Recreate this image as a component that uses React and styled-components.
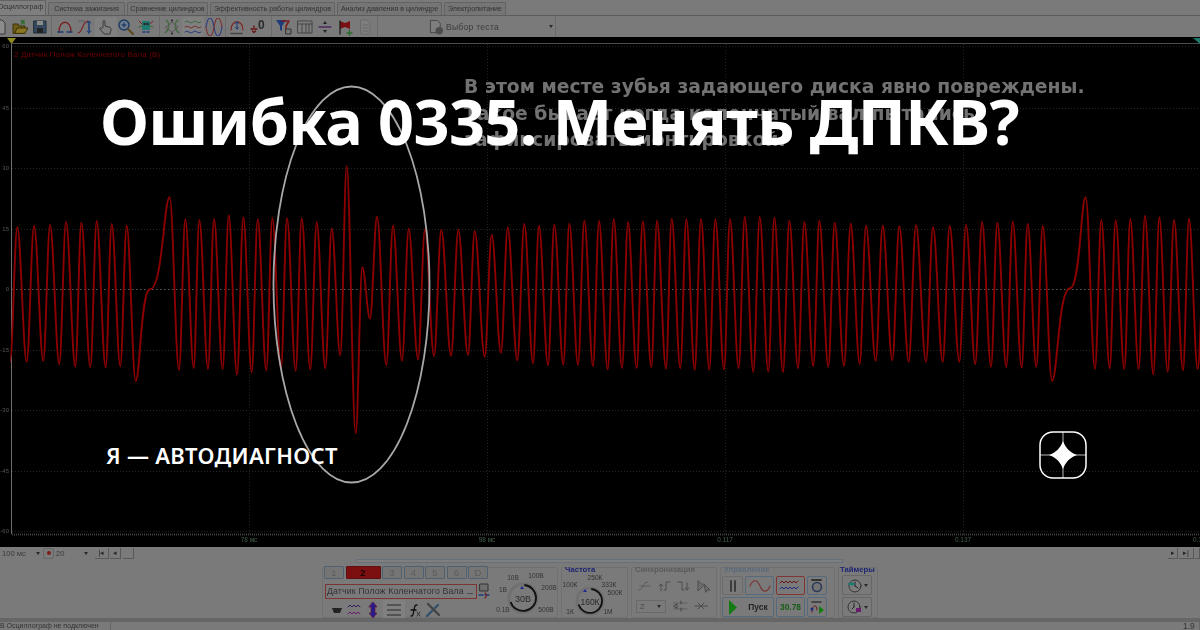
import React from "react";
import styled, { createGlobalStyle } from "styled-components";

const GlobalStyle = createGlobalStyle`
  html, body {
    margin: 0;
    padding: 0;
    background: #000;
  }
`;

const Page = styled.div`
  position: relative;
  width: 1200px;
  height: 630px;
  overflow: hidden;
  background: #000;
  font-family: "Liberation Sans", Arial, sans-serif;
`;

const Screenshot = styled.div`
  display: flex;
  flex-direction: column;
  height: 630px;
  filter: blur(0.65px);
`;

const TabBar = styled.div`
  display: flex;
  align-items: flex-end;
  gap: 2px;
  height: 16px;
  box-sizing: border-box;
  background: #7a7a7a;
  border-bottom: 1px solid #5c5c5c;
`;

const Tab = styled.div`
  flex: none;
  width: ${p => p.$w}px;
  height: ${p => (p.$active ? 15 : 13)}px;
  margin-left: ${p => (p.$active ? -5 : 0)}px;
  box-sizing: border-box;
  border: 1px solid #636363;
  border-bottom: 0;
  border-radius: 2px 2px 0 0;
  background: ${p => (p.$active ? "#7f7f7f" : "#757575")};
  color: #333;
  font-size: 7.1px;
  line-height: 12px;
  text-align: center;
  white-space: nowrap;
`;

const Toolbar = styled.div`
  display: flex;
  height: 21px;
  margin-left: -10px;
  background: #7a7a7a;
`;

const ToolGroup = styled.div`
  display: flex;
  align-items: center;
  flex: none;
  box-sizing: border-box;
  width: ${p => (p.$w ? `${p.$w}px` : "auto")};
  padding: 0 ${p => p.$r ?? 2}px 0 ${p => p.$l ?? 2}px;
  border-right: 1px solid #6a6a6a;
`;

const ToolSlot = styled.div`
  display: flex;
  align-items: center;
  justify-content: center;
  flex: none;
  width: ${p => p.$w ?? 20}px;
  height: 20px;
  background: ${p => (p.$on ? "#808080" : "transparent")};
`;

const TestLabel = styled.span`
  margin-left: 1px;
  color: #3c3c3c;
  font-size: 8.6px;
  letter-spacing: 0.25px;
  white-space: nowrap;
`;

const SmallArrow = styled.span`
  width: 0;
  height: 0;
  margin-left: ${p => p.$gap ?? 0}px;
  border-left: 2.5px solid transparent;
  border-right: 2.5px solid transparent;
  border-top: 3px solid #2a2a2a;
`;

const Scope = styled.div`
  position: relative;
  height: 510px;
  background: #000;
`;

const ScopeSvg = styled.svg`
  display: block;
  width: 1200px;
  height: 510px;
`;

const TraceName = styled.div`
  position: absolute;
  left: 14px;
  top: 13px;
  color: #700000;
  font-size: 8.1px;
  letter-spacing: 0.1px;
`;

const Caption = styled.div`
  position: absolute;
  left: 464px;
  top: 37px;
  color: #727272;
  font-family: "DejaVu Sans", sans-serif;
  font-size: 18.75px;
  font-weight: 700;
  line-height: 26.5px;
  white-space: nowrap;
`;

const Panel = styled.div`
  display: flex;
  flex-direction: column;
  height: 83px;
  background: #7a7a7a;
`;

const TimeRow = styled.div`
  display: flex;
  align-items: center;
  height: 12px;
  color: #3a3a3a;
  font-size: 7.6px;
`;

const TimeField = styled.div`
  display: flex;
  align-items: center;
  justify-content: space-between;
  flex: none;
  box-sizing: border-box;
  width: ${p => p.$w}px;
  padding: 0 ${p => p.$r ?? 0}px 0 2px;
`;

const RoundButton = styled.div`
  display: flex;
  align-items: center;
  justify-content: center;
  flex: none;
  box-sizing: border-box;
  width: 11px;
  height: 11px;
  border: 1px solid #666;
  border-radius: 2px;
  &::after {
    content: "";
    width: 4px;
    height: 4px;
    border-radius: 50%;
    background: #7c1c1c;
  }
`;

const StepButton = styled.div`
  display: flex;
  align-items: center;
  justify-content: center;
  flex: none;
  box-sizing: border-box;
  width: ${p => p.$w}px;
  height: 11px;
  margin-left: ${p => p.$m ?? 1}px;
  border-right: 1px solid #585858;
  border-bottom: 1px solid #585858;
  color: #222;
  font-size: 7px;
`;

const Spacer = styled.div`
  flex: 1;
`;

const Slider = styled.div`
  flex: none;
  box-sizing: border-box;
  width: 487px;
  height: 4px;
  margin-left: 356px;
  border: 1px solid #66707a;
  background: #7f7f7f;
`;

const ControlRow = styled.div`
  display: flex;
  gap: 3px;
  height: 53px;
  margin-top: 2px;
  padding-left: 322px;
`;

const Group = styled.div`
  display: flex;
  flex-direction: ${p => (p.$row ? "row" : "column")};
  flex: none;
  box-sizing: border-box;
  width: ${p => p.$w}px;
  height: 51px;
  margin-top: 2px;
  padding: 0 ${p => p.$pad ?? 0}px;
  border: 1px solid #707070;
  border-radius: 2px;
`;

const GroupTitle = styled.div`
  height: 10px;
  margin-top: -3px;
  margin-left: ${p => p.$m ?? 0}px;
  color: ${p => p.$color ?? "#555"};
  font-size: 7.7px;
  font-weight: 700;
  line-height: 10px;
  white-space: nowrap;
`;

const ChannelColumn = styled.div`
  display: flex;
  flex-direction: column;
  flex: none;
  width: 171px;
`;

const ChannelRow = styled.div`
  display: flex;
  gap: 1.5px;
  margin: -2px 0 0 1px;
`;

const ChannelButton = styled.div`
  flex: none;
  box-sizing: border-box;
  width: ${p => (p.$active ? 35 : 20)}px;
  height: 13px;
  border: 1px solid ${p => (p.$active ? "#601010" : "#4f6070")};
  border-radius: 1px;
  background: ${p => (p.$active ? "#7c0f0f" : "#757575")};
  color: ${p => (p.$active ? "#1d0505" : "#5c5c5c")};
  font-size: 9.5px;
  font-weight: ${p => (p.$active ? 700 : 400)};
  line-height: 11px;
  text-align: center;
`;

const SensorRow = styled.div`
  display: flex;
  align-items: center;
  margin: 4px 0 0 2px;
`;

const SensorField = styled.div`
  display: flex;
  align-items: center;
  justify-content: space-between;
  flex: none;
  box-sizing: border-box;
  width: 152px;
  height: 15px;
  padding: 0 1px;
  border: 1px solid #7a3434;
  color: #333;
  font-size: 8.8px;
  letter-spacing: 0.1px;
  white-space: nowrap;
`;

const Dots = styled.span`
  flex: none;
  width: 10px;
  color: #222;
  font-size: 7px;
  font-weight: 700;
  text-align: center;
`;

const ChannelTools = styled.div`
  display: flex;
  align-items: center;
  height: 18px;
  margin: 2px 0 0 5px;
`;

const KnobSvg = styled.svg`
  display: block;
  flex: none;
`;

const SyncRow = styled.div`
  display: flex;
  align-items: center;
  height: ${p => p.$h}px;
  margin-left: ${p => p.$m ?? 0}px;
`;

const SyncSelect = styled.div`
  display: flex;
  align-items: center;
  justify-content: space-between;
  flex: none;
  box-sizing: border-box;
  width: 30px;
  height: 13px;
  padding: 0 4px 0 3px;
  margin-right: 3px;
  border: 1px solid #6a6a6a;
  color: #444;
  font-size: 8px;
`;

const ControlGrid = styled.div`
  display: grid;
  grid-template-columns: 21px 29px 29px 20px;
  grid-template-rows: 19px 20px;
  column-gap: 2px;
  row-gap: 2px;
  margin: 1px 0 0 1px;
`;

const ControlButton = styled.div`
  display: flex;
  align-items: center;
  justify-content: center;
  gap: ${p => p.$gap ?? 0}px;
  box-sizing: border-box;
  grid-column: ${p => p.$span ?? "auto"};
  border: 1px solid ${p => p.$edge ?? "#556a7c"};
  border-radius: 2px;
  color: ${p => p.$color ?? "#222"};
  font-size: 8.4px;
  font-weight: 700;
`;

const TimerColumn = styled.div`
  display: flex;
  flex-direction: column;
  gap: 2px;
  margin: 0 0 0 3px;
`;

const TimerButton = styled.div`
  display: flex;
  align-items: center;
  justify-content: center;
  gap: 2px;
  box-sizing: border-box;
  width: 30px;
  height: 20px;
  border: 1px solid #666;
  border-radius: 2px;
`;

const Band = styled.div`
  flex: none;
  height: 4px;
  background: #666;
`;

const StatusBar = styled.div`
  display: flex;
  flex: none;
  height: 8px;
  color: #333;
  font-size: 7px;
  line-height: 8px;
  background: #7a7a7a;
`;

const StatusCell = styled.div`
  flex: none;
  width: ${p => p.$w}px;
  box-sizing: border-box;
  padding-left: ${p => p.$pad ?? 0}px;
  border-right: 1px solid #666;
  font-size: ${p => p.$size ?? 7}px;
  white-space: nowrap;
`;

const Overlay = styled.div`
  position: absolute;
  inset: 0;
  display: flex;
  flex-direction: column;
  justify-content: space-between;
  box-sizing: border-box;
  padding: 79px 113px 151px 100px;
  color: #fff;
`;

const Title = styled.h1`
  margin: 0;
  font-family: "Noto Sans", sans-serif;
  font-size: 63px;
  font-weight: 700;
  line-height: 84px;
  letter-spacing: -0.6px;
  white-space: nowrap;
`;

const Footer = styled.div`
  display: flex;
  align-items: center;
  justify-content: space-between;
  padding-left: 6px;
`;

const Brand = styled.div`
  font-family: "Noto Sans", sans-serif;
  font-size: 22px;
  font-weight: 600;
  line-height: 48px;
  letter-spacing: 0.3px;
  white-space: nowrap;
`;

const TABS = [
  ["Осциллограф", 51],
  ["Система зажигания", 77],
  ["Сравнение цилиндров", 81],
  ["Эффективность работы цилиндров", 125],
  ["Анализ давления в цилиндре", 105],
  ["Электропитание", 62]
];

const ZOOM_A = [
  [30, 635], [52, 232], [80, 635], [102, 228], [130, 633], [150, 225], [178, 642], [198, 216],
  [226, 650], [244, 218], [271, 651], [290, 213], [317, 652], [335, 222], [361, 649], [380, 227],
  [407, 693], [450, 418, 1], [509, 142], [537, 660], [556, 208], [581, 654], [598, 210], [624, 657],
  [642, 207], [668, 657], [686, 196], [711, 674], [730, 202], [755, 667], [773, 208], [799, 661],
  [817, 205], [843, 655], [861, 205], [887, 662], [905, 205], [931, 658], [950, 217], [976, 655],
  [995, 236], [1021, 616], [1040, 48], [1067, 850], [1087, 352], [1110, 506], [1131, 200], [1159, 645],
  [1179, 227], [1206, 632], [1226, 236], [1254, 628], [1275, 238], [1302, 618]
];

const ZOOM_B = [
  [34, 120], [63, 497], [85, 120], [114, 495], [134, 124], [164, 500], [185, 135], [213, 488],
  [233, 113], [262, 511], [283, 102], [309, 520], [327, 107], [354, 526], [373, 105], [400, 523],
  [418, 101], [444, 525], [463, 92], [489, 528], [507, 93], [533, 538], [551, 88], [576, 534],
  [594, 97], [620, 534], [638, 94], [664, 531], [681, 92], [708, 536], [725, 86], [751, 535],
  [769, 88], [794, 539], [813, 88], [838, 539], [856, 88], [882, 538], [900, 88], [926, 534],
  [944, 81], [970, 546], [989, 81], [1015, 545], [1033, 83], [1059, 546], [1078, 92], [1104, 535],
  [1123, 97], [1150, 528], [1168, 92], [1195, 530], [1214, 98], [1242, 528], [1262, 101], [1289, 522],
  [1308, 107], [1337, 512], [1358, 107], [1387, 511], [1408, 109], [1436, 515], [1458, 106]
];

const ZOOM_C = [
  [78, 575], [99, 172], [128, 575], [149, 168], [178, 575], [198, 165], [226, 582], [246, 156],
  [273, 590], [292, 158], [319, 591], [338, 155], [365, 593], [383, 162], [409, 590], [428, 168],
  [456, 632], [510, 355, 1], [557, 82], [585, 597], [604, 150], [629, 595], [647, 151], [673, 597],
  [691, 147], [716, 597], [735, 137], [760, 613], [778, 142], [803, 605], [822, 150], [849, 601],
  [867, 146], [893, 597], [915, 200]
];

const place = (list, x0, y0) => list.map(([x, y, f]) => [x0 + x / 3, y0 + y / 3, f]);

const tracePoints = [
  ...place(ZOOM_A, 0, 150),
  ...place(ZOOM_B, 430, 190),
  ...place(ZOOM_C, 900, 170)
];

const tracePath = tracePoints.reduce((d, [x, y, flat], i) => {
  if (!i) return `M${x} ${y}`;
  const [px, py, prevFlat] = tracePoints[i - 1];
  const dx = x - px;
  let a = 0.36;
  let b = 0.64;
  if (flat) {
    a = 0.3;
    b = 0.35;
  }
  if (prevFlat) {
    a = 0.65;
    b = 0.7;
  }
  return `${d} C${(px + a * dx).toFixed(1)} ${py.toFixed(1)} ${(px + b * dx).toFixed(1)} ${y.toFixed(1)} ${x.toFixed(1)} ${y.toFixed(1)}`;
}, "");

const Y_TICKS = [
  [46, "60"], [108, "45"], [168, "30"], [229, "15"], [289, "0"],
  [350, "-15"], [410, "-30"], [471, "-45"], [531, "-60"]
];

const X_TICKS = [
  [249, "78 мс"], [487, "98 мс"], [725, "0.117"], [963, "0.137"]
];

const Ico = ({ w = 18, h = 18, box = "0 0 18 18", children }) => (
  <svg width={w} height={h} viewBox={box} fill="none" strokeLinecap="round" strokeLinejoin="round">
    {children}
  </svg>
);

const DocIcon = () => (
  <Ico>
    <path d="M4 2h7l3 3v11H4z" fill="#8c8c8c" stroke="#3a3a3a" />
  </Ico>
);
const FolderIcon = () => (
  <Ico>
    <path d="M2 15V6h5l1 2h6v7z" fill="#6d5c18" stroke="#3c3208" />
    <path d="M4 15l2-5h11l-3 5z" fill="#8a7620" stroke="#3c3208" />
    <path d="M10 6l3-3M13 3v3M13 3h-3" stroke="#2c6a2c" strokeWidth="1.4" />
  </Ico>
);
const SaveIcon = () => (
  <Ico>
    <path d="M3 3h12v12H3z" fill="#35495e" stroke="#1e2c3a" />
    <path d="M6 3h6v4H6z" fill="#8a8a8a" />
    <path d="M6 10h6v5H6z" fill="#222" />
  </Ico>
);
const ArcIcon = () => (
  <Ico>
    <path d="M3 14C3 1 15 1 15 14" stroke="#7a2020" strokeWidth="1.3" />
    <path d="M2 14h5M11 14h5" stroke="#1d3c7a" strokeWidth="1.5" />
  </Ico>
);
const SpanIcon = () => (
  <Ico>
    <path d="M2 15C7 15 6 3 12 3" stroke="#7a2020" strokeWidth="1.2" />
    <path d="M13 4v11" stroke="#1d3c7a" strokeWidth="1.5" />
    <path d="M11 5l2-2 2 2M11 13l2 2 2-2" stroke="#1d3c7a" />
    <path d="M3 3h5" stroke="#555" strokeDasharray="1 1" />
  </Ico>
);
const HandIcon = () => (
  <Ico>
    <path d="M6 9V3.5a1 1 0 0 1 2 0V8l4 1c2 .5 2 2 2 3l-1 4H7L3 11c-.6-1 .6-2 1.5-1z" fill="#7e7e7e" stroke="#333" strokeWidth=".9" />
  </Ico>
);
const MagnifierIcon = () => (
  <Ico>
    <circle cx="7" cy="7" r="5" fill="#6c7c90" stroke="#1f3a62" strokeWidth="1.4" />
    <path d="M5 7h4M7 5v4" stroke="#132b58" />
    <path d="M11 11l5 5" stroke="#5a4818" strokeWidth="2" />
  </Ico>
);
const RobotIcon = () => (
  <Ico>
    <path d="M5 3h8v9H5z" fill="#1f7a72" />
    <circle cx="7.5" cy="6" r="1.2" fill="#222" />
    <circle cx="10.5" cy="6" r="1.2" fill="#222" />
    <path d="M2 3l3 3M16 3l-3 3" stroke="#7a2020" />
    <path d="M2 9l3-1M16 9l-3-1" stroke="#2a6a2a" />
    <path d="M6 14h2M10 14h2" stroke="#1d3c7a" strokeWidth="1.5" />
  </Ico>
);
const DiamondIcon = () => (
  <Ico>
    <path d="M2 15C7 11 7 5 3 2M16 15C11 11 11 5 15 2" stroke="#3e6a3e" strokeWidth="1.1" />
    <path d="M3 9L9 4l6 5-6 5z" stroke="#555" />
    <circle cx="9" cy="2.5" r="1" fill="#222" />
    <circle cx="9" cy="15.5" r="1" fill="#222" />
  </Ico>
);
const StackedWavesIcon = () => (
  <Ico>
    <path d="M1 4c3-3 5 3 8 0s5 3 8 0" stroke="#3e6a3e" />
    <path d="M1 9c3-3 5 3 8 0s5 3 8 0" stroke="#7a3030" />
    <path d="M1 14c3-3 5 3 8 0s5 3 8 0" stroke="#2c3c80" />
  </Ico>
);
const CrossWavesIcon = () => (
  <Ico>
    <path d="M1 9c2-12 6-12 8 0s6 12 8 0" stroke="#2c3c80" strokeWidth="1.1" />
    <path d="M1 9c2 12 6 12 8 0s6-12 8 0" stroke="#7a3030" strokeWidth="1.1" />
  </Ico>
);
const AutoIcon = () => (
  <Ico>
    <path d="M3 12C3 1 15 1 15 12" stroke="#7a2020" strokeWidth="1.2" />
    <path d="M9 4v7M7.5 5.5L9 4l1.5 1.5M7.5 9.5L9 11l1.5-1.5" stroke="#1d3c7a" />
    <path d="M3 15.5h12" stroke="#444" strokeWidth="1.6" strokeDasharray="2 1" />
  </Ico>
);
const ZeroIcon = () => (
  <Ico>
    <path d="M2 11h6M5 8v1.5M3.5 13L5 14.5 6.5 13" stroke="#6a1414" strokeWidth="1.4" />
    <text x="9" y="11" fontSize="12" fontWeight="700" fill="#2a2a2a" fontFamily="Liberation Sans, sans-serif">0</text>
  </Ico>
);
const FilterIcon = () => (
  <Ico>
    <path d="M1 2h10L7 8v5l-2-1V8z" fill="#1d3c7a" />
    <path d="M7 3h7L11 8v3" stroke="#7a1c1c" strokeWidth="1.5" />
    <path d="M11 11h5v5h-5z" fill="#777" stroke="#333" />
  </Ico>
);
const TableIcon = () => (
  <Ico>
    <path d="M2 3h14v12H2z" fill="#7e7e7e" stroke="#444" />
    <path d="M2 6h14M6 6v9M10 6v9M13 6v9" stroke="#444" />
  </Ico>
);
const DivideIcon = () => (
  <Ico>
    <path d="M3 9h12" stroke="#4e2a60" strokeWidth="1.3" />
    <path d="M9 3l-2 3h4zM9 15l-2-3h4z" fill="#222" />
  </Ico>
);
const FlagIcon = () => (
  <Ico>
    <path d="M4 16V3l5 2 5-2v8l-5-2-5 2" fill="#7a0f14" />
    <path d="M4 3v13" stroke="#222" strokeWidth="1.4" />
    <path d="M11 15h5M13.5 12.5v5" stroke="#2c6a2c" strokeWidth="1.3" />
  </Ico>
);
const GreyDocIcon = () => (
  <Ico>
    <path d="M5 2h6l3 3v11H5z" fill="#7e7e7e" stroke="#6a6a6a" />
    <path d="M7 7h5M7 10h5M7 13h5" stroke="#6a6a6a" />
  </Ico>
);
const TestIcon = () => (
  <Ico>
    <path d="M3 2h7l3 3v10H3z" fill="#7e7e7e" stroke="#444" />
    <circle cx="12" cy="13" r="4" fill="#4c4c4c" />
  </Ico>
);

const PlayIcon = () => (
  <Ico w={10} h={15} box="0 0 10 15">
    <path d="M1 0l8 7.5-8 7.5z" fill="#147a14" />
  </Ico>
);

const Knob = ({ box, cx, cy, r, value, labels, marker, width, height, valueSize = 9 }) => (
  <KnobSvg width={width} height={height} viewBox={box}>
    <circle cx={cx} cy={cy} r={r + 1} stroke="#707070" strokeWidth="3" fill="none" />
    <path
      d={`M${cx + r * 0.1} ${cy - r} A${r} ${r} 0 1 1 ${cx - r * 0.95} ${cy + r * 0.3}`}
      stroke="#111"
      strokeWidth="1.8"
      fill="none"
    />
    <path d={`M${marker[0] - 2} ${marker[1] + 2}L${marker[0]} ${marker[1] - 1}L${marker[0] + 2} ${marker[1] + 2}z`} fill="#1e2c90" />
    {labels.map(([x, y, t]) => (
      <text key={t} x={x} y={y} fontSize="6.6" fill="#333" textAnchor="middle" fontFamily="Liberation Sans, sans-serif">
        {t}
      </text>
    ))}
    <text x={cx} y={cy + 3.5} fontSize={valueSize} fill="#2a2a2a" textAnchor="middle" fontFamily="Liberation Sans, sans-serif">
      {value}
    </text>
  </KnobSvg>
);

const StarLogo = () => (
  <svg width="48" height="48" viewBox="0 0 48 48" fill="none">
    <rect x="1" y="1" width="46" height="46" rx="13" stroke="#fff" strokeWidth="1.5" />
    <path d="M24 1v46M1 24h46" stroke="#fff" strokeOpacity=".72" strokeWidth="1" />
    <path d="M24 10C26.5 17 31 21.5 38 24C31 26.5 26.5 31 24 38C21.5 31 17 26.5 10 24C17 21.5 21.5 17 24 10Z" fill="#fff" />
  </svg>
);

const App = () => (
  <Page>
    <GlobalStyle />
    <Screenshot>
      <TabBar>
        {TABS.map(([name, w], idx) => (
          <Tab key={name} $w={w} $active={idx === 0}>
            {name}
          </Tab>
        ))}
      </TabBar>
      <Toolbar>
        <ToolGroup $l={0} $r={1}>
          <ToolSlot><DocIcon /></ToolSlot>
          <ToolSlot><FolderIcon /></ToolSlot>
          <ToolSlot><SaveIcon /></ToolSlot>
        </ToolGroup>
        <ToolGroup $l={3}>
          <ToolSlot><ArcIcon /></ToolSlot>
          <ToolSlot><SpanIcon /></ToolSlot>
          <ToolSlot $w={22} $on><HandIcon /></ToolSlot>
          <ToolSlot $w={18}><MagnifierIcon /></ToolSlot>
          <ToolSlot $w={22}><RobotIcon /></ToolSlot>
        </ToolGroup>
        <ToolGroup $r={1}>
          <ToolSlot><DiamondIcon /></ToolSlot>
          <ToolSlot $w={22} $on><StackedWavesIcon /></ToolSlot>
          <ToolSlot><CrossWavesIcon /></ToolSlot>
        </ToolGroup>
        <ToolGroup $l={1}>
          <ToolSlot><AutoIcon /></ToolSlot>
          <ToolSlot $w={22}><ZeroIcon /></ToolSlot>
        </ToolGroup>
        <ToolGroup>
          <ToolSlot><FilterIcon /></ToolSlot>
          <ToolSlot $w={21}><TableIcon /></ToolSlot>
          <ToolSlot><DivideIcon /></ToolSlot>
          <ToolSlot><FlagIcon /></ToolSlot>
          <ToolSlot><GreyDocIcon /></ToolSlot>
        </ToolGroup>
        <ToolGroup $w={178} $l={50}>
          <TestIcon />
          <TestLabel>Выбор теста</TestLabel>
          <SmallArrow $gap={50} />
        </ToolGroup>
      </Toolbar>
      <Scope>
        <ScopeSvg viewBox="0 37 1200 510">
          <path d="M12 43.5H1200" stroke="#4c4c4c" />
          {Y_TICKS.map(([y, label]) => (
            <React.Fragment key={y}>
              <path
                d={`M12 ${y + 0.5}H1200`}
                stroke={label === "0" ? "#5c5c5c" : "#262626"}
                strokeDasharray={label === "0" ? "1.5 2.5" : "1 2"}
              />
              <text x="9" y={y + 2} fontSize="6" fill="#565656" textAnchor="end" fontFamily="Liberation Sans, sans-serif">
                {label}
              </text>
            </React.Fragment>
          ))}
          {X_TICKS.map(([x, label]) => (
            <React.Fragment key={x}>
              <path d={`M${x + 0.5} 44V534`} stroke="#222" strokeDasharray="1 2" />
              <text x={x} y="542" fontSize="6.4" fill="#45604a" textAnchor="middle" fontFamily="Liberation Sans, sans-serif">
                {label}
              </text>
            </React.Fragment>
          ))}
          <text x="1193" y="542" fontSize="6.4" fill="#45604a" fontFamily="Liberation Sans, sans-serif">0.1</text>
          <path d="M11.5 44V534" stroke="#6e6e6e" />
          <path d="M12 534.5H1200" stroke="#3e3e3e" strokeWidth="2" strokeDasharray="1 1" />
          <path d="M7 38h9l-4.500 6z" fill="#8c8a20" />
          <path d="M1193 38h7v6z" fill="#1d7a6a" />
          <path d={tracePath} stroke="#8c0000" strokeWidth="1.9" fill="none" strokeLinejoin="round" />
          <ellipse cx="351.5" cy="284.5" rx="78" ry="198" stroke="#a8a8a8" strokeWidth="1.8" fill="none" />
        </ScopeSvg>
        <TraceName>2 Датчик Полож Коленчатого Вала (В)</TraceName>
        <Caption>
          В этом месте зубья задающего диска явно повреждены.
          <br />
          Такое бывает когда коленчатый вал пытались
          <br />
          зафиксировать монтировкой.
        </Caption>
      </Scope>
      <Panel>
        <TimeRow>
          <TimeField $w={43} $r={3}>100 мс<SmallArrow /></TimeField>
          <RoundButton />
          <TimeField $w={39} $r={5}>20<SmallArrow /></TimeField>
          <StepButton $w={14} $m={2}>|◂</StepButton>
          <StepButton $w={11}>◂</StepButton>
          <StepButton $w={11} $m={2} />
          <Spacer />
          <StepButton $w={10}>▸</StepButton>
          <StepButton $w={15}>▸|</StepButton>
          <StepButton $w={5} />
        </TimeRow>
        <Slider />
        <ControlRow>
          <Group $row $w={236}>
            <ChannelColumn>
              <ChannelRow>
                {["1", "2", "3", "4", "5", "6", "D"].map(n => (
                  <ChannelButton key={n} $active={n === "2"}>{n}</ChannelButton>
                ))}
              </ChannelRow>
              <SensorRow>
                <SensorField>Датчик Полож Коленчатого Вала<Dots>...</Dots></SensorField>
                <Ico w={14} h={16} box="0 0 14 16">
                  <path d="M3 1h8v7H3z" fill="#6e6e6e" stroke="#333" />
                  <path d="M2 12h4M8 12h4" stroke="#1d3c7a" strokeWidth="1.4" />
                  <path d="M8 10a3 3 0 0 1 0 5" stroke="#7a2020" strokeWidth="1.2" />
                </Ico>
              </SensorRow>
              <ChannelTools>
                <ToolSlot $w={17}>
                  <Ico w={12} h={10} box="0 0 12 10"><path d="M1 3h10l-2 5H3z" fill="#222" /></Ico>
                </ToolSlot>
                <ToolSlot $w={18}>
                  <Ico w={14} h={14} box="0 0 14 14">
                    <path d="M1 4l2-2 2 2 2-2 2 2 2-2 2 2" stroke="#33205a" />
                    <path d="M1 11l2-2 2 2 2-2 2 2 2-2 2 2" stroke="#6a1a6a" />
                  </Ico>
                </ToolSlot>
                <ToolSlot $w={20}>
                  <Ico w={12} h={16} box="0 0 12 16"><path d="M6 0l4 5H8v6h2l-4 5-4-5h2V5H2z" fill="#2a1a8a" stroke="#6a1030" strokeWidth=".6" /></Ico>
                </ToolSlot>
                <ToolSlot $w={22} $on>
                  <Ico w={14} h={12} box="0 0 14 12"><path d="M0 1h14M0 6h14M0 11h14" stroke="#444" strokeWidth="1.3" /></Ico>
                </ToolSlot>
                <ToolSlot $w={18}>
                  <Ico w={13} h={13} box="0 0 13 13">
                    <path d="M3 12c2 0 2-1 3-6s1-5 3-5M3 6h5" stroke="#111" strokeWidth="1.3" />
                    <path d="M9 8l3 4M12 8l-3 4" stroke="#333" />
                  </Ico>
                </ToolSlot>
                <ToolSlot $w={20}>
                  <Ico w={16} h={16} box="0 0 16 16">
                    <path d="M2 14L13 3" stroke="#33506a" strokeWidth="2.4" />
                    <path d="M3 2l11 11" stroke="#444" strokeWidth="2.4" />
                  </Ico>
                </ToolSlot>
              </ChannelTools>
            </ChannelColumn>
            <Knob
              box="493 568 63 48"
              width={63}
              height={48}
              cx={522}
              cy={598}
              r={13}
              value="30В"
              marker={[521, 587]}
              labels={[
                [512, 580, "10В"], [535, 578, "100В"], [502, 592, "1В"],
                [548, 590, "200В"], [502, 612, "0.1В"], [545, 612, "500В"]
              ]}
            />
          </Group>
          <Group $w={67}>
            <GroupTitle $m={3} $color="#1e2470">Частота</GroupTitle>
            <Knob
              box="562 574 65 42"
              width={65}
              height={42}
              cx={590}
              cy={600}
              r={12}
              value="160К"
              valueSize={8.5}
              marker={[585, 589]}
              labels={[
                [595, 579, "250К"], [570, 586, "100К"], [609, 586, "333К"],
                [615, 594, "500К"], [570, 613, "1К"], [608, 613, "1М"]
              ]}
            />
          </Group>
          <Group $w={86}>
            <GroupTitle $m={3} $color="#5a5a5a">Синхронизация</GroupTitle>
            <SyncRow $h={22} $m={3}>
              <ToolSlot $w={19}><Ico w={14} h={14} box="0 0 14 14"><path d="M1 11c5 0 3-8 9-8M2 7h10" stroke="#5c5c5c" /></Ico></ToolSlot>
              <ToolSlot $w={20}><Ico w={14} h={14} box="0 0 14 14"><path d="M4 12V5M2 7l2-2 2 2M7 11h2V3h4" stroke="#4c4c4c" /></Ico></ToolSlot>
              <ToolSlot $w={20}><Ico w={14} h={14} box="0 0 14 14"><path d="M1 3h4v8h2M10 4v7M8 9l2 2 2-2" stroke="#4c4c4c" /></Ico></ToolSlot>
              <ToolSlot $w={20}><Ico w={14} h={14} box="0 0 14 14"><path d="M1 2v10l5-5zM7 5l6 6-3 0-1 2z" stroke="#4c4c4c" fill="#6e6e6e" /></Ico></ToolSlot>
            </SyncRow>
            <SyncRow $h={18} $m={4}>
              <SyncSelect>2<SmallArrow /></SyncSelect>
              <ToolSlot $w={24}><Ico w={16} h={12} box="0 0 16 12"><path d="M1 3h14M1 9h14" stroke="#5c5c5c" strokeDasharray="1 1" /><path d="M8 1v3M8 8v3M1 6l3-2v4z" stroke="#444" /></Ico></ToolSlot>
              <ToolSlot $w={16}><Ico w={14} h={8} box="0 0 14 8"><path d="M0 4h14M4 1l3 3-3 3M10 1L7 4l3 3" stroke="#4c4c4c" /></Ico></ToolSlot>
            </SyncRow>
          </Group>
          <Group $w={115}>
            <GroupTitle $m={3} $color="#5a6a7c">Управление</GroupTitle>
            <ControlGrid>
              <ControlButton $edge="#6c6c6c">
                <Ico w={10} h={12} box="0 0 10 12"><path d="M3 1v10M7 1v10" stroke="#3c3c3c" strokeWidth="2" /></Ico>
              </ControlButton>
              <ControlButton>
                <Ico w={22} h={12} box="0 0 22 12"><path d="M1 6c3-7 7-7 10 0s7 7 10 0" stroke="#7a3030" strokeWidth="1.1" /></Ico>
              </ControlButton>
              <ControlButton $edge="#803434">
                <Ico w={24} h={13} box="0 0 24 13">
                  <path d="M1 4l2-2 2 2 2-2 2 2 2-2 2 2 2-2 2 2 2-2" stroke="#6a1414" />
                  <path d="M1 10l2-2 2 2 2-2 2 2 2-2 2 2 2-2 2 2 2-2" stroke="#1d2a80" />
                </Ico>
              </ControlButton>
              <ControlButton>
                <Ico w={14} h={15} box="0 0 14 15">
                  <path d="M2 2h10" stroke="#333" strokeWidth="2" strokeDasharray="1 1" />
                  <circle cx="7" cy="9" r="4.5" stroke="#2c3a5a" strokeWidth="1.6" fill="#737373" />
                </Ico>
              </ControlButton>
              <ControlButton $span="span 2" $gap={10}>
                <PlayIcon />
                Пуск
              </ControlButton>
              <ControlButton $color="#155c15">30.78</ControlButton>
              <ControlButton>
                <Ico w={15} h={15} box="0 0 15 15">
                  <path d="M2 2h9" stroke="#333" strokeWidth="1.6" strokeDasharray="1 1" />
                  <path d="M2 12c0-8 5-8 5-2" stroke="#6a1414" />
                  <path d="M9 6l5 4-5 4z" fill="#147a14" />
                  <circle cx="2" cy="9" r="1.5" fill="#1d2a80" />
                </Ico>
              </ControlButton>
            </ControlGrid>
          </Group>
          <Group $w={40}>
            <GroupTitle $m={1} $color="#1e2470">Таймеры</GroupTitle>
            <TimerColumn>
              <TimerButton>
                <Ico w={15} h={15} box="0 0 15 15">
                  <circle cx="8" cy="8" r="6" stroke="#333" fill="#7e7e7e" />
                  <path d="M8 8V4M8 8l3 2" stroke="#222" />
                  <path d="M1 5h4l-1-2 4 3-4 3 1-2H1z" fill="#1f7a72" />
                </Ico>
                <SmallArrow />
              </TimerButton>
              <TimerButton>
                <Ico w={15} h={15} box="0 0 15 15">
                  <circle cx="7" cy="7" r="6" stroke="#333" fill="#7e7e7e" />
                  <path d="M7 7V3M7 7l-2 2" stroke="#222" />
                  <path d="M9 8h5v4H9z" fill="#6a1a6a" />
                </Ico>
                <SmallArrow />
              </TimerButton>
            </TimerColumn>
          </Group>
        </ControlRow>
        <Band />
        <StatusBar>
          <StatusCell $w={111}>В Осциллограф не подключен</StatusCell>
          <Spacer />
          <StatusCell $w={20} $pad={3} $size={8.5}>1.9</StatusCell>
        </StatusBar>
      </Panel>
    </Screenshot>
    <Overlay>
      <Title>Ошибка 0335. Менять ДПКВ?</Title>
      <Footer>
        <Brand>Я — АВТОДИАГНОСТ</Brand>
        <StarLogo />
      </Footer>
    </Overlay>
  </Page>
);

export default App;
